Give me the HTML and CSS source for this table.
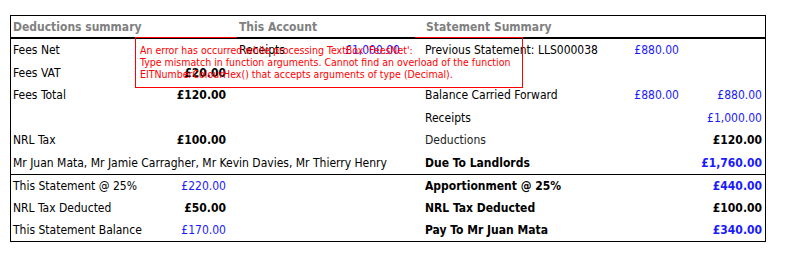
FILE: index.html
```html
<!DOCTYPE html>
<html>
<head>
<meta charset="utf-8">
<link rel="stylesheet" href="styles.css">
</head>
<body>
<div class="page">
  <div class="box">
    <div class="head">
      <div class="h h-left">Deductions summary</div>
      <div class="h h-mid">This Account</div>
      <div class="h h-right">Statement Summary</div>
    </div>
    <div class="upper">
      <div class="row">
        <div class="lbl">Fees Net</div><div class="val"></div>
        <div class="acc"><span>Receipts</span><span class="blue acc-val">£1,000.00</span></div>
        <div class="slbl">Previous Statement: LLS000038</div><div class="mval blue">£880.00</div><div class="rval"></div>
      </div>
      <div class="row">
        <div class="lbl">Fees VAT</div><div class="val b">£20.00</div>
        <div class="acc"></div>
        <div class="slbl"></div><div class="mval"></div><div class="rval"></div>
      </div>
      <div class="row">
        <div class="lbl">Fees Total</div><div class="val b">£120.00</div>
        <div class="acc"></div>
        <div class="slbl">Balance Carried Forward</div><div class="mval blue">£880.00</div><div class="rval blue">£880.00</div>
      </div>
      <div class="row">
        <div class="lbl"></div><div class="val"></div>
        <div class="acc"></div>
        <div class="slbl">Receipts</div><div class="mval"></div><div class="rval blue">£1,000.00</div>
      </div>
      <div class="row">
        <div class="lbl">NRL Tax</div><div class="val b">£100.00</div>
        <div class="acc"></div>
        <div class="slbl thin">Deductions</div><div class="mval"></div><div class="rval b">£120.00</div>
      </div>
      <div class="row">
        <div class="names">Mr Juan Mata, Mr Jamie Carragher, Mr Kevin Davies, Mr Thierry Henry</div>
        <div class="slbl b">Due To Landlords</div><div class="mval"></div><div class="rval b blue">£1,760.00</div>
      </div>
    </div>
    <div class="lower">
      <div class="row row-l">
        <div class="lbl">This Statement @ 25%</div><div class="val blue">£220.00</div>
        <div class="acc"></div>
        <div class="slbl b">Apportionment @ 25%</div><div class="mval"></div><div class="rval b blue">£440.00</div>
      </div>
      <div class="row row-l">
        <div class="lbl">NRL Tax Deducted</div><div class="val b">£50.00</div>
        <div class="acc"></div>
        <div class="slbl b">NRL Tax Deducted</div><div class="mval"></div><div class="rval b">£100.00</div>
      </div>
      <div class="row row-l">
        <div class="lbl">This Statement Balance</div><div class="val blue">£170.00</div>
        <div class="acc"></div>
        <div class="slbl b">Pay To Mr Juan Mata</div><div class="mval"></div><div class="rval b blue">£340.00</div>
      </div>
    </div>
    <div class="error">An error has occurred while processing TextBox 'FeesNet':<br>Type mismatch in function arguments. Cannot find an overload of the function<br>EITNumberColourHex() that accepts arguments of type (Decimal).</div>
  </div>
</div>
</body>
</html>
```
FILE: styles.css
```css
html, body {
  margin: 0;
  padding: 0;
  background: #fff;
}
body {
  font-family: "DejaVu Sans Condensed", "DejaVu Sans", sans-serif;
  font-size: 12px;
  color: #000;
}
.page {
  padding: 15px 0 0 10px;
}
.box {
  position: relative;
  width: 756px;
  box-sizing: border-box;
  border: 1px solid #000;
}
.head {
  display: grid;
  grid-template-columns: 226px 178px 350px;
  height: 23px;
  color: #808080;
  font-weight: bold;
  font-size: 12px;
}
.h {
  display: flex;
  align-items: center;
  border-bottom: 2px solid #000;
}
.h-left { padding-left: 2px; }
.h-mid {
  padding-left: 2px;
  position: relative;
  z-index: 2;
}
.h-right { padding-left: 11px; }
.row {
  display: grid;
  grid-template-columns: 139px 86px 186px 178px 82px 83px;
  height: 22.5px;
  align-items: center;
  white-space: nowrap;
}
.row-l { height: 22px; }
.lower {
  border-top: 1px solid #000;
}
.lbl { padding-left: 2px; }
.val { text-align: right; padding-right: 10px; }
.acc {
  padding-left: 3px;
  display: flex;
  justify-content: space-between;
  padding-right: 22px;
}
.slbl { padding-left: 3px; }
.mval { text-align: right; padding-right: 3px; }
.rval { text-align: right; padding-right: 3px; }
.names {
  grid-column: 1 / 4;
  padding-left: 2px;
}
.b { font-weight: bold; font-size: 12px; }
.blue { color: #1a1aff; }
.thin { color: #222; }
.error {
  position: absolute;
  left: 124px;
  top: 21px;
  width: 388px;
  height: 51px;
  box-sizing: border-box;
  border: 1px solid #ff0000;
  color: #ff0000;
  font-size: 10.5px;
  line-height: 12px;
  padding: 6px 0 0 4px;
  white-space: nowrap;
  overflow: hidden;
  z-index: 1;
}
```
